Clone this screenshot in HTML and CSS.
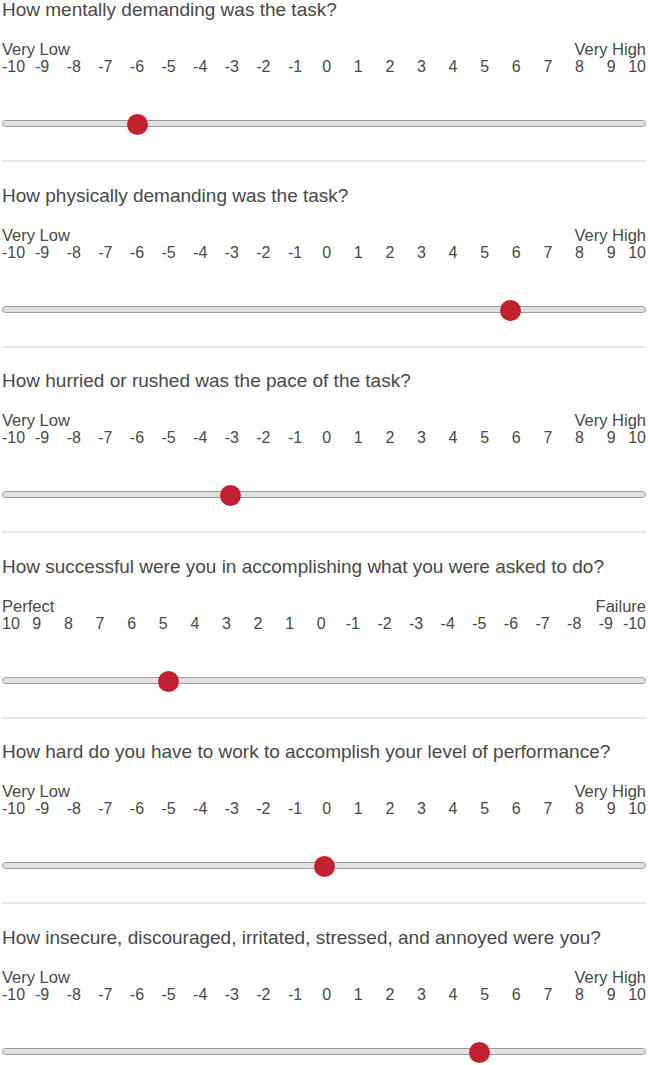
FILE: index.html
```html
<!DOCTYPE html>
<html lang="en">
<head>
  <meta charset="UTF-8">
  <meta name="viewport" content="width=device-width, initial-scale=1.0">
  <title>Task Load Index</title>
  <link rel="stylesheet" href="styles.css">
</head>
<body>

  <div class="survey">

    <!-- 1 -->
    <div class="item">
      <p class="question">How mentally demanding was the task?</p>
      <div class="ends"><span>Very Low</span><span>Very High</span></div>
      <div class="ticks">
        <span class="end">-10</span>
        <div class="mid">
          <span>-9</span><span>-8</span><span>-7</span><span>-6</span><span>-5</span><span>-4</span><span>-3</span><span>-2</span><span>-1</span><span>0</span><span>1</span><span>2</span><span>3</span><span>4</span><span>5</span><span>6</span><span>7</span><span>8</span><span>9</span>
        </div>
        <span class="end">10</span>
      </div>
      <input type="range" class="slider" min="-10" max="10" value="-6">
    </div>

    <!-- 2 -->
    <div class="item">
      <p class="question">How physically demanding was the task?</p>
      <div class="ends"><span>Very Low</span><span>Very High</span></div>
      <div class="ticks">
        <span class="end">-10</span>
        <div class="mid">
          <span>-9</span><span>-8</span><span>-7</span><span>-6</span><span>-5</span><span>-4</span><span>-3</span><span>-2</span><span>-1</span><span>0</span><span>1</span><span>2</span><span>3</span><span>4</span><span>5</span><span>6</span><span>7</span><span>8</span><span>9</span>
        </div>
        <span class="end">10</span>
      </div>
      <input type="range" class="slider" min="-10" max="10" value="6">
    </div>

    <!-- 3 -->
    <div class="item">
      <p class="question">How hurried or rushed was the pace of the task?</p>
      <div class="ends"><span>Very Low</span><span>Very High</span></div>
      <div class="ticks">
        <span class="end">-10</span>
        <div class="mid">
          <span>-9</span><span>-8</span><span>-7</span><span>-6</span><span>-5</span><span>-4</span><span>-3</span><span>-2</span><span>-1</span><span>0</span><span>1</span><span>2</span><span>3</span><span>4</span><span>5</span><span>6</span><span>7</span><span>8</span><span>9</span>
        </div>
        <span class="end">10</span>
      </div>
      <input type="range" class="slider" min="-10" max="10" value="-3">
    </div>

    <!-- 4 : reversed scale -->
    <div class="item">
      <p class="question">How successful were you in accomplishing what you were asked to do?</p>
      <div class="ends"><span>Perfect</span><span>Failure</span></div>
      <div class="ticks">
        <span class="end">10</span>
        <div class="mid">
          <span>9</span><span>8</span><span>7</span><span>6</span><span>5</span><span>4</span><span>3</span><span>2</span><span>1</span><span>0</span><span>-1</span><span>-2</span><span>-3</span><span>-4</span><span>-5</span><span>-6</span><span>-7</span><span>-8</span><span>-9</span>
        </div>
        <span class="end">-10</span>
      </div>
      <input type="range" class="slider slider-reverse" min="-10" max="10" value="5">
    </div>

    <!-- 5 -->
    <div class="item">
      <p class="question">How hard do you have to work to accomplish your level of performance?</p>
      <div class="ends"><span>Very Low</span><span>Very High</span></div>
      <div class="ticks">
        <span class="end">-10</span>
        <div class="mid">
          <span>-9</span><span>-8</span><span>-7</span><span>-6</span><span>-5</span><span>-4</span><span>-3</span><span>-2</span><span>-1</span><span>0</span><span>1</span><span>2</span><span>3</span><span>4</span><span>5</span><span>6</span><span>7</span><span>8</span><span>9</span>
        </div>
        <span class="end">10</span>
      </div>
      <input type="range" class="slider" min="-10" max="10" value="0">
    </div>

    <!-- 6 -->
    <div class="item">
      <p class="question">How insecure, discouraged, irritated, stressed, and annoyed were you?</p>
      <div class="ends"><span>Very Low</span><span>Very High</span></div>
      <div class="ticks">
        <span class="end">-10</span>
        <div class="mid">
          <span>-9</span><span>-8</span><span>-7</span><span>-6</span><span>-5</span><span>-4</span><span>-3</span><span>-2</span><span>-1</span><span>0</span><span>1</span><span>2</span><span>3</span><span>4</span><span>5</span><span>6</span><span>7</span><span>8</span><span>9</span>
        </div>
        <span class="end">10</span>
      </div>
      <input type="range" class="slider" min="-10" max="10" value="5">
    </div>

  </div>

</body>
</html>
```

FILE: styles.css
```css
html, body {
  margin: 0;
  padding: 0;
  background: #fff;
}

body {
  font-family: "Liberation Sans", Arial, sans-serif;
  color: #484848;
  overflow-x: hidden;
}

.survey {
  padding: 0 2px;
}

.item {
  padding-bottom: 26px;
  margin-bottom: 23.5px;
  border-bottom: 2px solid #e6e6e6;
}

.question {
  margin: 0 0 20px;
  font-size: 19px;
  line-height: 20px;
  white-space: nowrap;
}

/* Very Low / Very High */
.ends {
  display: flex;
  justify-content: space-between;
  font-size: 16.5px;
  line-height: 18px;
}

.ticks {
  display: flex;
  font-size: 16px;
  line-height: 18px;
}

.ticks .mid {
  flex: 1;
  display: flex;
  justify-content: space-between;
  margin: 0 17px;
}

/* centre each number on its step */
.ticks .mid span {
  width: 0;
  display: flex;
  justify-content: center;
  white-space: nowrap;
}

.slider {
  -webkit-appearance: none;
  appearance: none;
  display: block;
  width: 100%;
  height: 21px;
  margin: 37px 0 0;
  padding: 0;
  background: transparent;
}

.slider-reverse {
  direction: rtl;
}

.slider::-webkit-slider-runnable-track {
  height: 7px;
  background: #e0e0e0;
  border: 1px solid #9a9a9a;
  border-radius: 5px;
}

.slider::-webkit-slider-thumb {
  -webkit-appearance: none;
  width: 21px;
  height: 21px;
  margin-top: -7px;
  border: none;
  border-radius: 50%;
  background: #c1212f;
}

.slider::-moz-range-track {
  height: 7px;
  background: #e0e0e0;
  border: 1px solid #9a9a9a;
  border-radius: 5px;
}

.slider::-moz-range-thumb {
  width: 21px;
  height: 21px;
  border: none;
  border-radius: 50%;
  background: #c1212f;
}
```
